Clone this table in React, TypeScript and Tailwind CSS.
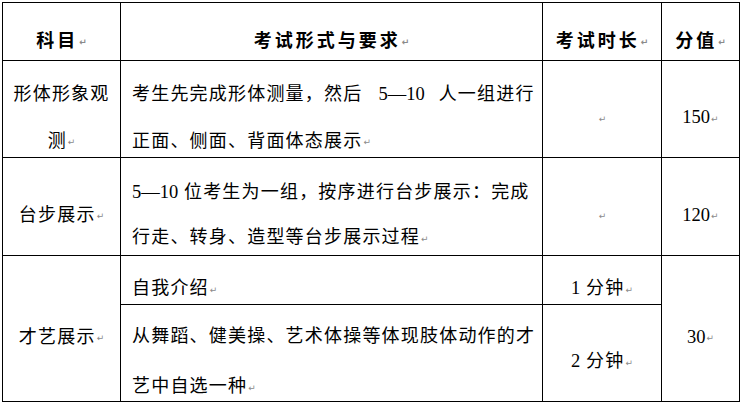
import React from "react";

const Mark = () => (
  <span className="font-['DejaVu_Sans',sans-serif] text-[9px] text-[#8a8a8a] tracking-normal align-middle ml-[1px]">↵</span>
);

const N = ({ children }: { children: React.ReactNode }) => (
  <span className="text-[18.5px] tracking-normal">{children}</span>
);

const cellBase =
  "border-r border-b border-black flex flex-col justify-center pt-[18px] whitespace-nowrap";
const head =
  "border-r border-b border-black flex flex-col justify-center pt-[18px] whitespace-nowrap items-center font-bold tracking-[3px] text-[18px] font-['Noto_Sans_CJK_SC',sans-serif]";

export default function App() {
  return (
    <div className="w-[743px] h-[405px] bg-white font-['Liberation_Serif','Noto_Sans_CJK_SC',serif] text-[18px] text-black leading-[22px] tracking-[1.2px]">
      <div className="ml-[2px] mt-[2px] w-[738px] border-l border-t border-black grid grid-cols-[118px_422px_119px_78px] grid-rows-[58px_97px_98px_49px_97px]">
        {/* Header */}
        <div className={head}>
          <div>
            科目<Mark />
          </div>
        </div>
        <div className={head}>
          <div>
            考试形式与要求<Mark />
          </div>
        </div>
        <div className={head}>
          <div>
            考试时长<Mark />
          </div>
        </div>
        <div className={head}>
          <div>
            分值<Mark />
          </div>
        </div>

        {/* Row 1 */}
        <div className={`${cellBase} items-center gap-[25px]`}>
          <div>形体形象观</div>
          <div>
            测<Mark />
          </div>
        </div>
        <div className={`${cellBase} items-start pl-[11px] gap-[25px]`}>
          <div>
            考生先完成形体测量，然后<span className="inline-block w-[16px]" />
            <N>5—10</N>
            <span className="inline-block w-[14px]" />人一组进行
          </div>
          <div>
            正面、侧面、背面体态展示<Mark />
          </div>
        </div>
        <div className={`${cellBase} items-center`}>
          <div>
            <Mark />
          </div>
        </div>
        <div className={`${cellBase} items-center`}>
          <div>
            <N>150</N>
            <Mark />
          </div>
        </div>

        {/* Row 2 */}
        <div className={`${cellBase} items-center`}>
          <div>
            台步展示<Mark />
          </div>
        </div>
        <div className={`${cellBase} items-start pl-[11px] gap-[23px]`}>
          <div>
            <N>5—10</N> 位考生为一组，按序进行台步展示：完成
          </div>
          <div>
            行走、转身、造型等台步展示过程<Mark />
          </div>
        </div>
        <div className={`${cellBase} items-center`}>
          <div>
            <Mark />
          </div>
        </div>
        <div className={`${cellBase} items-center`}>
          <div>
            <N>120</N>
            <Mark />
          </div>
        </div>

        {/* Row 3 */}
        <div className={`${cellBase} items-center row-span-2`}>
          <div>
            才艺展示<Mark />
          </div>
        </div>
        <div className={`${cellBase} items-start pl-[11px]`}>
          <div>
            自我介绍<Mark />
          </div>
        </div>
        <div className={`${cellBase} items-center`}>
          <div>
            <N>1</N> 分钟<Mark />
          </div>
        </div>
        <div className={`${cellBase} items-center row-span-2`}>
          <div>
            <N>30</N>
            <Mark />
          </div>
        </div>
        <div className={`${cellBase} items-start pl-[11px] gap-[28px]`}>
          <div>从舞蹈、健美操、艺术体操等体现肢体动作的才</div>
          <div>
            艺中自选一种<Mark />
          </div>
        </div>
        <div className={`${cellBase} items-center`}>
          <div>
            <N>2</N> 分钟<Mark />
          </div>
        </div>
      </div>
    </div>
  );
}
